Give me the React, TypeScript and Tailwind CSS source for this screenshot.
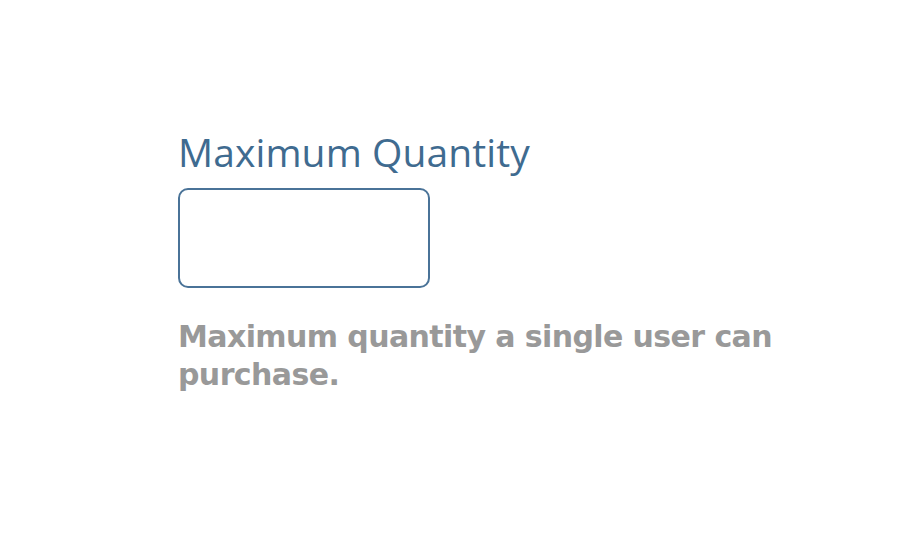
export default function App() {
  return (
    <div className="w-[900px] h-[550px] bg-white relative overflow-hidden">
      <div className="pl-[178px] pt-[128px] flex flex-col">
        <label className="text-[39px] leading-[48px] text-[#3f6b90] font-normal tracking-[0.1px]" style={{ fontFamily: '"Open Sans", sans-serif' }}>
          Maximum Quantity
        </label>
        <div className="mt-[12px] w-[252px] h-[100px] border-2 border-[#4a7398] rounded-[10px]" />
        <p className="mt-[30px] w-[640px] text-[30px] leading-[38px] text-[#999999] font-bold tracking-[-0.6px]" style={{ fontFamily: '"DejaVu Sans", sans-serif' }}>
          Maximum quantity a single user can purchase.
        </p>
      </div>
    </div>
  );
}
